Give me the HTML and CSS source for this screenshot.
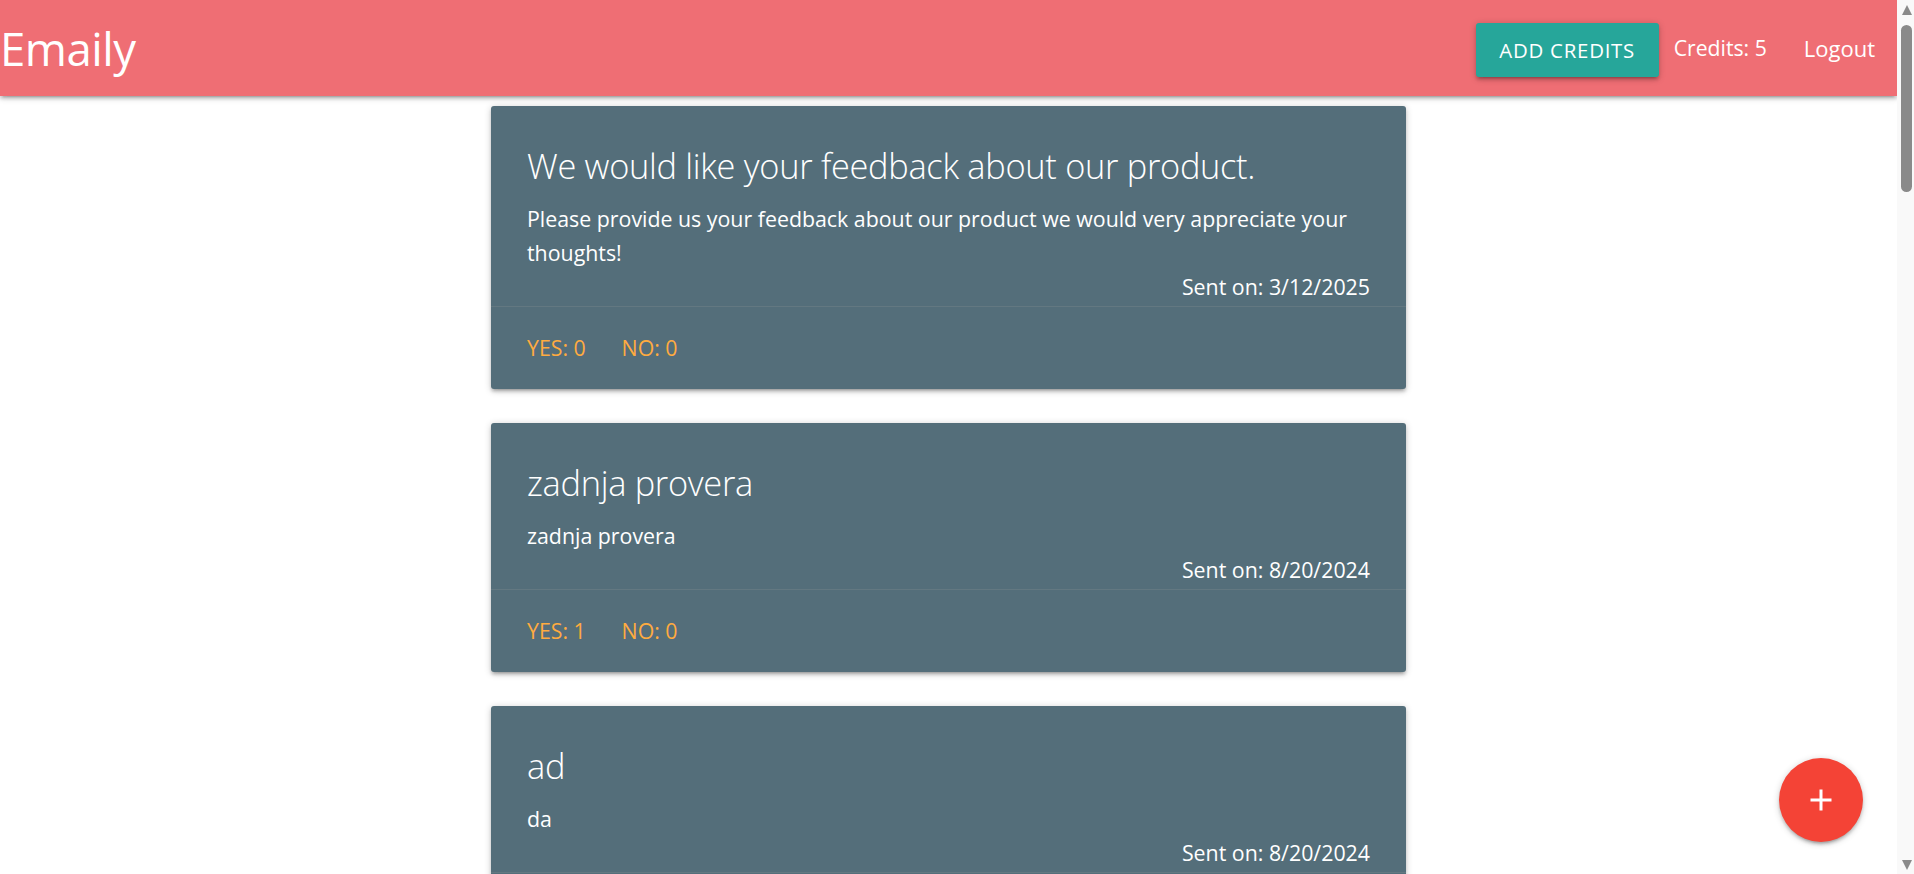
FILE: index.html
```html
<!DOCTYPE html>
<html lang="en">
<head>
<meta charset="utf-8">
<title>Emaily</title>
<link rel="stylesheet" href="styles.css">
</head>
<body>
<div class="page">
  <div class="viewport">
    <nav class="nav">
      <a class="brand" href="#">Emaily</a>
      <ul class="nav-links">
        <li><button class="btn">Add Credits</button></li>
        <li class="credits">Credits: 5</li>
        <li><a class="nav-link" href="#">Logout</a></li>
      </ul>
    </nav>
    <main class="container">
      <div class="card-wrap">
        <div class="card">
          <div class="card-content">
            <span class="card-title">We would like your feedback about our product.</span>
            <p class="card-body">Please provide us your feedback about our product we would very appreciate your thoughts!</p>
            <p class="sent">Sent on: 3/12/2025</p>
          </div>
          <div class="card-action">
            <a href="#">Yes: 0</a>
            <a href="#">No: 0</a>
          </div>
        </div>
      </div>
      <div class="card-wrap">
        <div class="card">
          <div class="card-content">
            <span class="card-title">zadnja provera</span>
            <p class="card-body">zadnja provera</p>
            <p class="sent">Sent on: 8/20/2024</p>
          </div>
          <div class="card-action">
            <a href="#">Yes: 1</a>
            <a href="#">No: 0</a>
          </div>
        </div>
      </div>
      <div class="card-wrap">
        <div class="card">
          <div class="card-content">
            <span class="card-title">ad</span>
            <p class="card-body">da</p>
            <p class="sent">Sent on: 8/20/2024</p>
          </div>
          <div class="card-action">
            <a href="#">Yes: 0</a>
            <a href="#">No: 0</a>
          </div>
        </div>
      </div>
    </main>
  </div>
  <div class="scrollbar">
    <span class="arrow-up"></span>
    <span class="thumb"></span>
    <span class="track-fill"></span>
    <span class="arrow-down"></span>
  </div>
</div>
<a class="fab" href="#" aria-label="New survey">
  <svg viewBox="0 0 24 24" width="36" height="36"><path fill="#fff" d="M19 13h-6v6h-2v-6H5v-2h6V5h2v6h6v2z"/></svg>
</a>
</body>
</html>
```

FILE: styles.css
```css
* { box-sizing: border-box; }
html, body {
  margin: 0;
  padding: 0;
  height: 874px;
  overflow: hidden;
  background: #fff;
}
body {
  font-family: "Open Sans", "Noto Sans", sans-serif;
  font-size: 22.5px;
  line-height: 1.5;
  color: rgba(0,0,0,0.87);
}
.page {
  display: flex;
  height: 874px;
}
.viewport {
  flex: 1;
  height: 874px;
  overflow: hidden;
}

/* nav */
.nav {
  height: 96px;
  background: #ef6e74;
  color: #fff;
  display: flex;
  align-items: center;
  justify-content: space-between;
  box-shadow: 0 3px 3px 0 rgba(0,0,0,.14), 0 4.5px 1.5px -3px rgba(0,0,0,.12), 0 1.5px 7.5px 0 rgba(0,0,0,.2);
  position: relative;
  z-index: 2;
}
.brand {
  color: #fff;
  text-decoration: none;
  font-size: 45.5px;
  line-height: 96px;
  padding-left: 0;
  letter-spacing: -0.5px;
}
.nav-links {
  list-style: none;
  margin: 0;
  padding: 0;
  display: flex;
  align-items: center;
  height: 96px;
}
.nav-links li {
  line-height: 96px;
  font-size: 22px;
}
.btn {
  font-family: inherit;
  border: none;
  border-radius: 3px;
  background: #26a69a;
  color: #fff;
  text-transform: uppercase;
  font-size: 20.4px;
  letter-spacing: 0.75px;
  height: 54px;
  line-height: 54px;
  padding: 0;
  width: 183px;
  margin-top: 4px;
  display: block;
  text-align: center;
  white-space: nowrap;
  box-shadow: 0 3px 3px 0 rgba(0,0,0,.14), 0 4.5px 1.5px -3px rgba(0,0,0,.12), 0 1.5px 7.5px 0 rgba(0,0,0,.2);
}
.nav-links li.credits {
  margin: 0 15px;
  font-size: 21.2px;
}
.nav-link {
  color: #fff;
  text-decoration: none;
  padding: 0 22px;
  display: block;
}

/* cards */
.container {
  width: 915px;
  margin: 0 auto;
  display: flex;
  flex-direction: column;
}
.card-wrap {
  padding-top: 10px;
  padding-bottom: 24px;
}
.card {
  background: #546e7a;
  color: #fff;
  border-radius: 3px;
  box-shadow: 0 3px 3px 0 rgba(0,0,0,.14), 0 4.5px 1.5px -3px rgba(0,0,0,.12), 0 1.5px 7.5px 0 rgba(0,0,0,.2);
}
.card-content {
  padding: 36px 36px 2px;
}
.card-title {
  display: block;
  font-size: 34.4px;
  font-weight: 300;
  line-height: 48px;
  margin-bottom: 12px;
  letter-spacing: -0.3px;
}
.card-body, .sent {
  margin: 0;
  font-size: 21.35px;
  line-height: 34px;
}
.sent {
  text-align: right;
}
.card-action {
  border-top: 1px solid rgba(160,160,160,0.2);
  padding: 24px 36px;
  line-height: 33.75px;
}
.card-action a {
  color: #ffab40;
  text-decoration: none;
  text-transform: uppercase;
  margin-right: 30px;
  font-size: 21.3px;
}

/* scrollbar */
.scrollbar {
  width: 17px;
  height: 874px;
  background: #f9f9f9;
  display: flex;
  flex-direction: column;
  align-items: center;
  padding: 5px 0 4px 2px;
}
.arrow-up, .arrow-down {
  width: 0;
  height: 0;
  border-left: 5.5px solid transparent;
  border-right: 5.5px solid transparent;
}
.arrow-up {
  border-bottom: 10px solid #8a8a8a;
}
.arrow-down {
  border-top: 10px solid #8a8a8a;
}
.thumb {
  width: 11px;
  height: 167px;
  margin-top: 10px;
  border-radius: 6px;
  background: #8a8a8a;
}
.track-fill {
  flex: 1;
}

/* fab */
.fab {
  position: fixed;
  right: 51px;
  bottom: 32px;
  width: 84px;
  height: 84px;
  border-radius: 50%;
  background: #f44336;
  display: flex;
  align-items: center;
  justify-content: center;
  box-shadow: 0 3px 3px 0 rgba(0,0,0,.14), 0 4.5px 1.5px -3px rgba(0,0,0,.12), 0 1.5px 7.5px 0 rgba(0,0,0,.2);
}
.fab svg { display: block; }
```
